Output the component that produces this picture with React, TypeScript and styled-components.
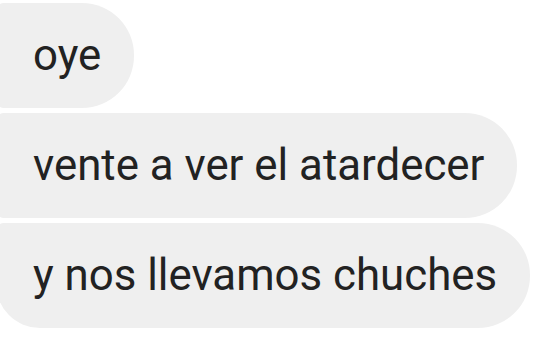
import styled, { createGlobalStyle } from 'styled-components';

const GlobalStyle = createGlobalStyle`
  body {
    margin: 0;
    background: #ffffff;
    font-family: Roboto, "Liberation Sans", sans-serif;
  }
`;

const Thread = styled.div`
  display: flex;
  flex-direction: column;
  align-items: flex-start;
  gap: 5px;
  padding-top: 3px;
  margin-left: -4px;
`;

type Place = 'first' | 'middle' | 'last';

const Bubble = styled.div<{ $place: Place }>`
  box-sizing: border-box;
  height: 105px;
  display: flex;
  align-items: center;
  padding: 0 33px 0 37px;
  background: #efefef;
  color: #222222;
  font-size: 43.8px;
  line-height: 1;
  white-space: nowrap;
  border-radius: ${({ $place }) =>
    $place === 'last' ? '8px 52px 52px 44px' : '8px 52px 52px 8px'};
`;

const messages: string[] = ['oye', 'vente a ver el atardecer', 'y nos llevamos chuches'];

const App = () => {
  return (
    <>
      <GlobalStyle />
      <Thread>
        {messages.map((m, i) => (
          <Bubble key={m} $place={i === 0 ? 'first' : i === messages.length - 1 ? 'last' : 'middle'}>
            {m}
          </Bubble>
        ))}
      </Thread>
    </>
  );
};

export default App;
